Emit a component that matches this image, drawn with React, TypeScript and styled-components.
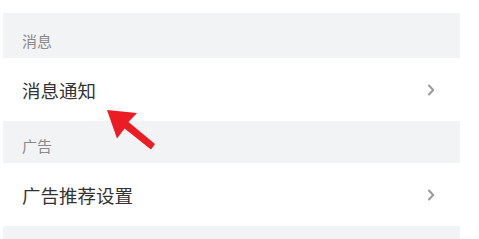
import React from "react"
import styled, { createGlobalStyle } from "styled-components"

const GlobalStyle = createGlobalStyle`
  html, body {
    margin: 0;
    padding: 0;
    background: #ffffff;
    font-family: "Noto Sans CJK SC", "Noto Sans", sans-serif;
  }
`

const Page = styled.div`
  position: relative;
  width: 479px;
  height: 239px;
  overflow: hidden;
  padding-top: 13px;
  box-sizing: border-box;
`

const Panel = styled.div`
  margin-left: 3px;
  width: 457px;
  background: #f2f3f5;
  display: flex;
  flex-direction: column;
`

const SectionHeader = styled.div<{ $height: number }>`
  height: ${p => p.$height}px;
  box-sizing: border-box;
  display: flex;
  align-items: flex-end;
  padding: 0 0 9px 19px;
  font-size: 15px;
  line-height: 17px;
  color: #8a8a8a;
`

const Row = styled.div`
  height: 63px;
  background: #ffffff;
  display: flex;
  align-items: center;
  justify-content: space-between;
  padding: 0 25px 0 19px;
  font-size: 18.5px;
  color: #333333;
`

const Spacer = styled.div`
  height: 20px;
`

const Chevron = () => (
  <svg width="8" height="12" viewBox="0 0 8 12">
    <path d="M2 1.5 L6.2 6 L2 10.5" fill="none" stroke="#9a9a9a" strokeWidth="2" strokeLinecap="round" strokeLinejoin="round" />
  </svg>
)

const Arrow = styled.svg`
  position: absolute;
  left: 100px;
  top: 104px;
`

const App = () => {
  return (
    <Page>
      <GlobalStyle />
      <Panel>
        <SectionHeader $height={45}>消息</SectionHeader>
        <Row>
          <span>消息通知</span>
          <Chevron />
        </Row>
        <SectionHeader $height={42}>广告</SectionHeader>
        <Row>
          <span>广告推荐设置</span>
          <Chevron />
        </Row>
        <Spacer />
      </Panel>
      <Arrow width="60" height="50" viewBox="100 104 60 50">
        <polygon
          points="107,110 137,113 128.5,122 155,144 151,149.5 124.5,128.5 117,138.5"
          fill="#ec1c24"
        />
      </Arrow>
    </Page>
  )
}

export default App
